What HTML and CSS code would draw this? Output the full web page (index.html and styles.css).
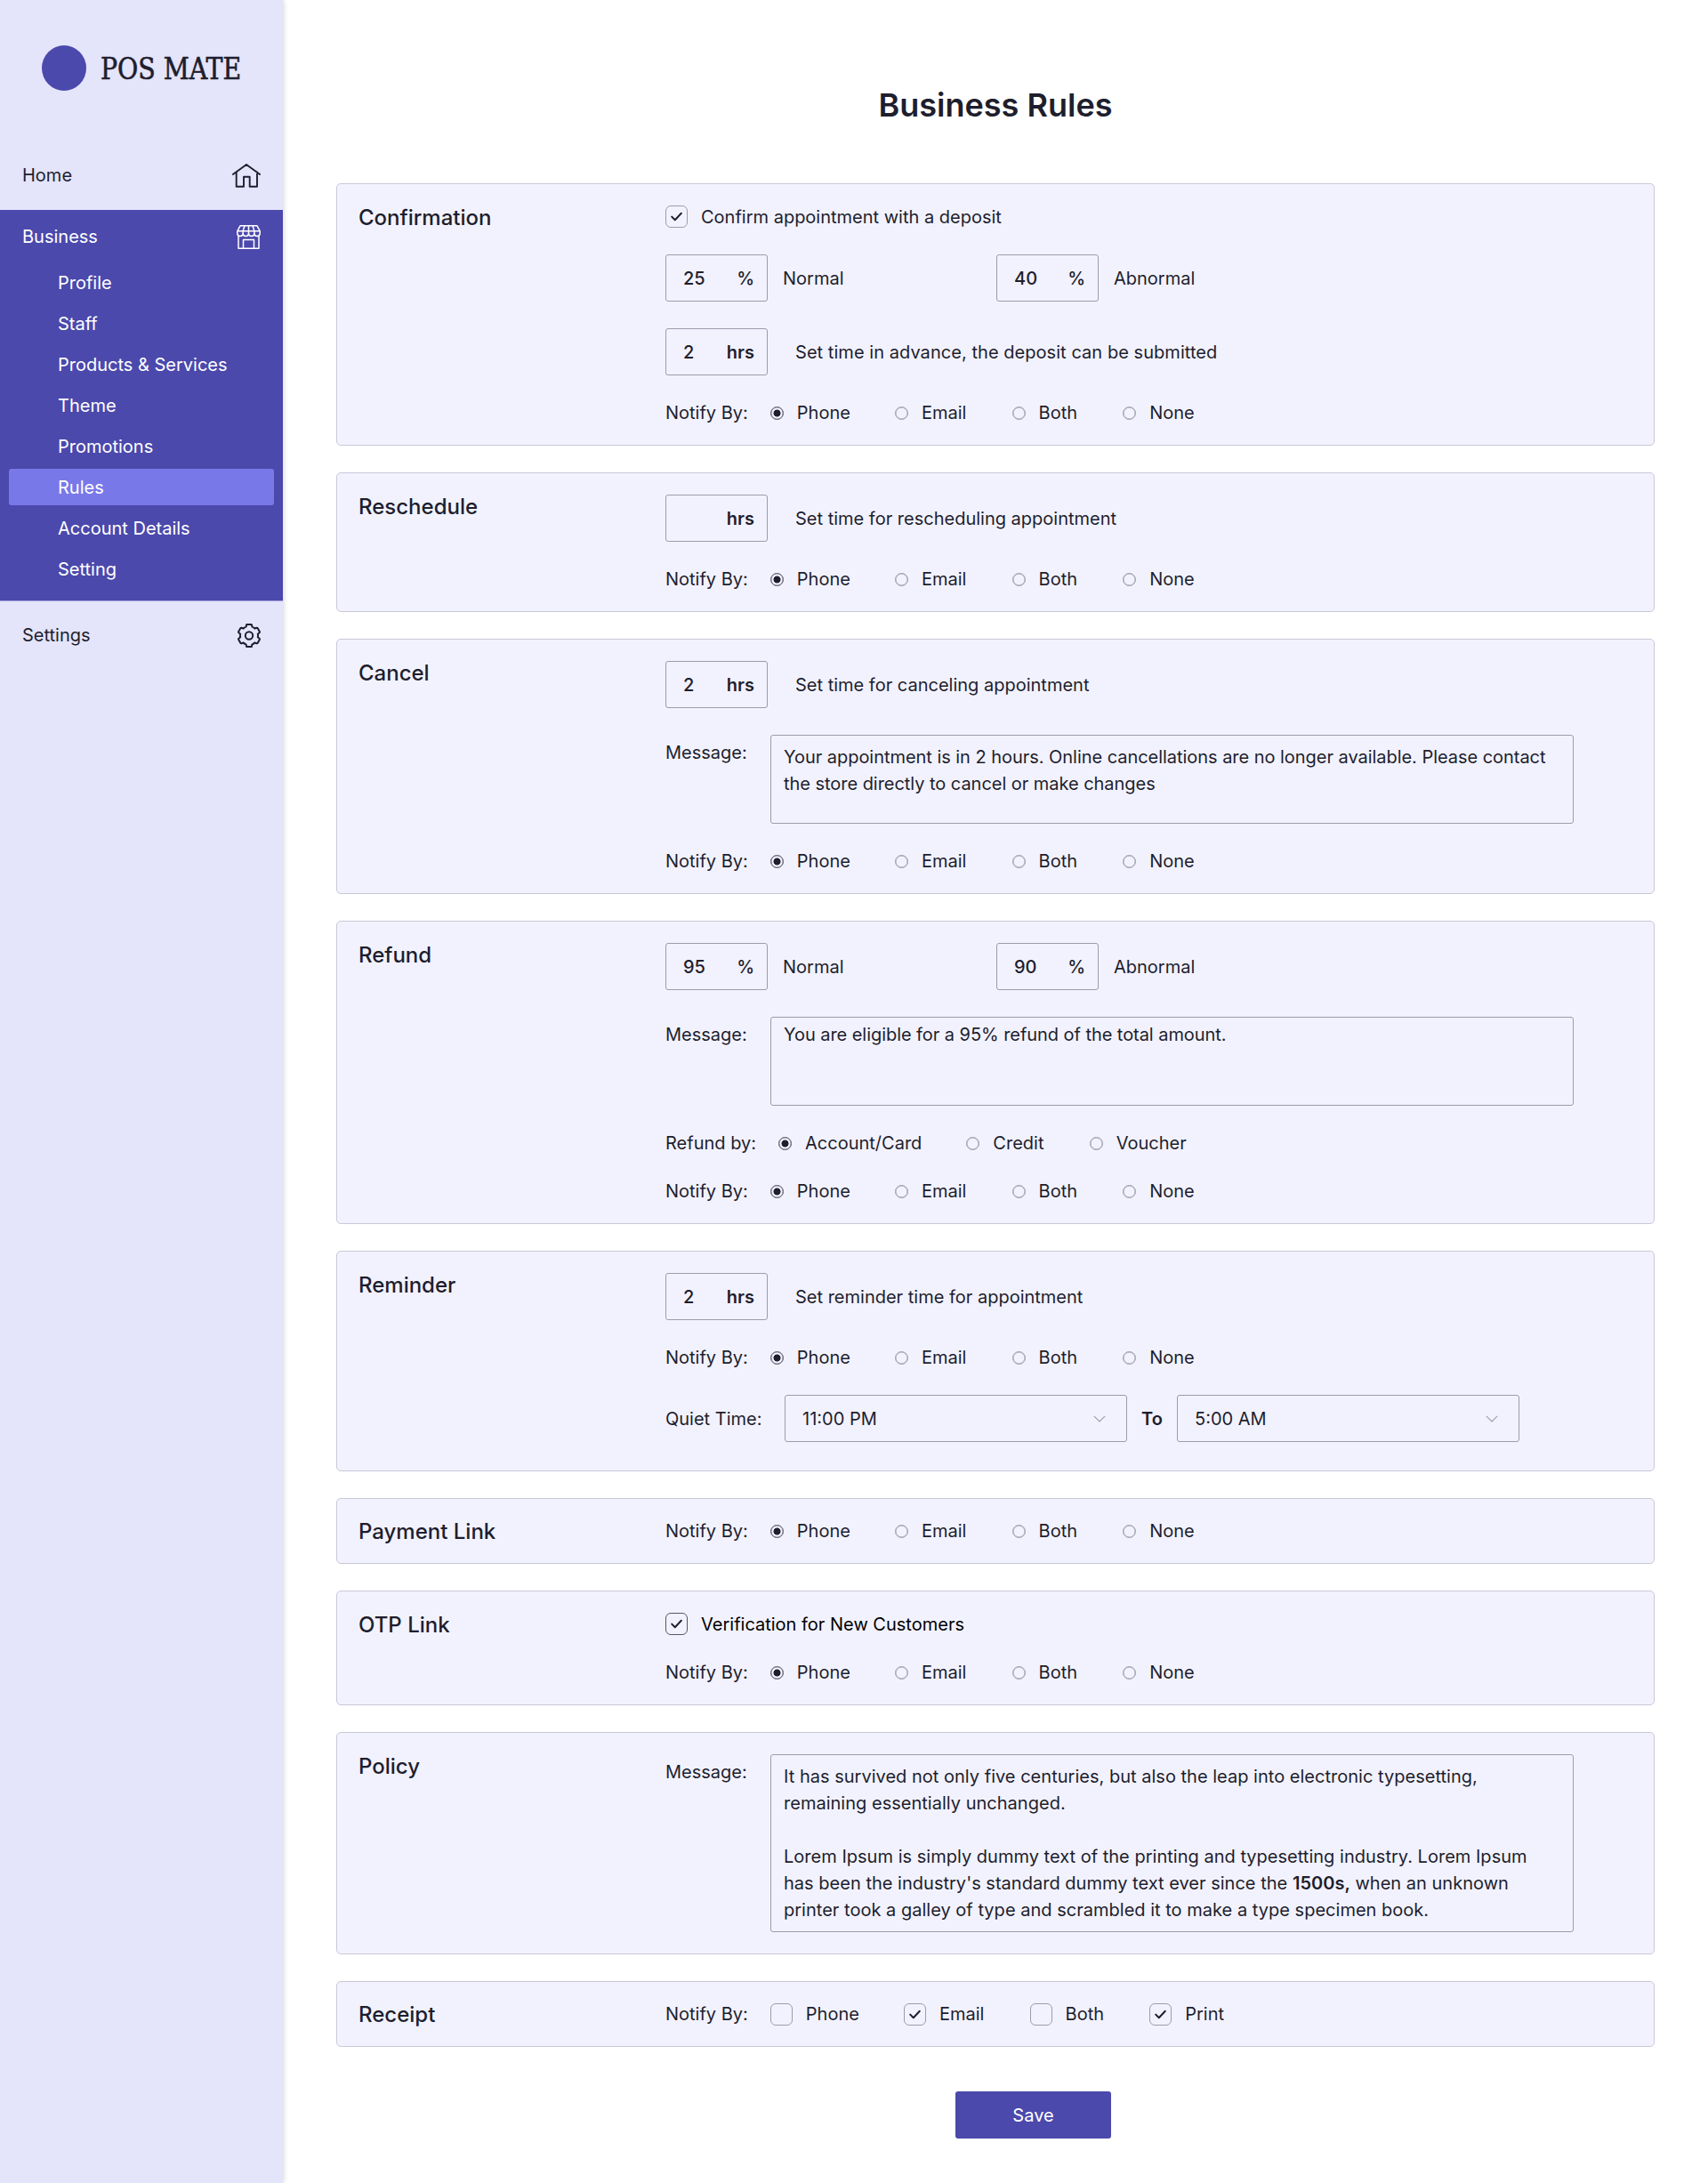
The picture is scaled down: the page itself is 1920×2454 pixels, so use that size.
FILE: index.html
```html
<!DOCTYPE html>
<html lang="en">
<head>
<meta charset="utf-8">
<title>Business Rules</title>
<link rel="stylesheet" href="styles.css">
</head>
<body>
<svg class="sprite" aria-hidden="true">
  <symbol id="tick" viewBox="0 0 25 25"><path d="M7.2 12.6l3.6 3.7 7-7.6" fill="none" stroke="currentColor" stroke-width="2" stroke-linecap="round" stroke-linejoin="round"/></symbol>
  <symbol id="chevron" viewBox="0 0 14 8"><path d="M.8.8L7 7 13.2.8" fill="none" stroke="currentColor" stroke-width="1.1"/></symbol>
</svg>
<div class="layout">
  <aside class="sidebar">
    <div class="logo"><span class="logo-mark"></span><span class="logo-name">POS MATE</span></div>
    <a class="nav-row nav-home"><span>Home</span>
      <svg class="ico-home" viewBox="0 0 32 27"><path d="M.9 12L16 1l15.100 11M4.700 9.500V25.700H13V14.700H19.700V25.700H28V9.500" fill="none" stroke="currentColor" stroke-width="1.900" stroke-linejoin="round" stroke-linecap="round"/></svg>
    </a>
    <div class="nav-group">
      <a class="nav-row"><span>Business</span>
        <svg class="ico-store" viewBox="0 0 27 27"><path d="M4 .8H23L26.200 6.800V9.300A3.100 3.100 0 0 1 19.900 9.300 3.200 3.200 0 0 1 13.500 9.300 3.200 3.200 0 0 1 7.100 9.300 3.100 3.100 0 0 1 .8 9.300V6.800ZM.8 6.800H26.200M9 .8L7.100 6.800V9.300M13.500.8V9.300M18 .8L19.900 6.800V9.300M2 12V26.200H25V12M7.500 26V16.500H19.500V26" fill="none" stroke="currentColor" stroke-width="1.500" stroke-linejoin="round"/></svg>
      </a>
      <div class="subnav">
        <a>Profile</a><a>Staff</a><a>Products &amp; Services</a><a>Theme</a><a>Promotions</a><a class="active">Rules</a><a>Account Details</a><a>Setting</a>
      </div>
    </div>
    <a class="nav-row nav-settings"><span>Settings</span>
      <svg class="ico-gear" viewBox="0 0 26 27"><path d="M10 1.500Q10 1 10.500 1H15.500Q16 1 16 1.500L16.400 3.600Q18 4 19.300 5.500L21.500 4.700Q22.300 4.500 22.700 5.200L24.800 9Q25.200 9.700 24.600 10.200L22.800 11.700Q23.300 13.500 22.800 15.300L24.600 16.800Q25.200 17.300 24.800 18L22.700 21.800Q22.300 22.500 21.500 22.300L19.300 21.500Q18 23 16.400 23.400L16 25.500Q16 26 15.500 26H10.500Q10 26 10 25.500L9.600 23.400Q8 23 6.700 21.500L4.500 22.300Q3.700 22.500 3.300 21.800L1.200 18Q.8 17.300 1.400 16.800L3.200 15.300Q2.700 13.500 3.200 11.700L1.400 10.200Q.8 9.700 1.200 9L3.300 5.200Q3.700 4.500 4.500 4.700L6.700 5.500Q8 4 9.600 3.600Z" fill="none" stroke="currentColor" stroke-width="2" stroke-linejoin="round"/><circle cx="13" cy="13.500" r="4.200" fill="none" stroke="currentColor" stroke-width="2"/></svg>
    </a>
  </aside>

  <main class="main">
    <h1>Business Rules</h1>

    <section class="card">
      <h2>Confirmation</h2>
      <div class="rows">
        <div class="check-row"><span class="box"><svg><use href="#tick"/></svg></span><span>Confirm appointment with a deposit</span></div>
        <div class="pair">
          <div class="field"><div class="num"><span>25</span><span class="pct">%</span></div><span>Normal</span></div>
          <div class="field"><div class="num"><span>40</span><span class="pct">%</span></div><span>Abnormal</span></div>
        </div>
        <div class="field wide deposit"><div class="num"><span>2</span><b>hrs</b></div><span>Set time in advance, the deposit can be submitted</span></div>
        <div class="options"><span class="label">Notify By:</span><span class="opt"><i class="radio on"></i>Phone</span><span class="opt"><i class="radio"></i>Email</span><span class="opt"><i class="radio"></i>Both</span><span class="opt"><i class="radio"></i>None</span></div>
      </div>
    </section>

    <section class="card">
      <h2>Reschedule</h2>
      <div class="rows">
        <div class="field wide"><div class="num"><span></span><b>hrs</b></div><span>Set time for rescheduling appointment</span></div>
        <div class="options"><span class="label">Notify By:</span><span class="opt"><i class="radio on"></i>Phone</span><span class="opt"><i class="radio"></i>Email</span><span class="opt"><i class="radio"></i>Both</span><span class="opt"><i class="radio"></i>None</span></div>
      </div>
    </section>

    <section class="card">
      <h2>Cancel</h2>
      <div class="rows">
        <div class="field wide"><div class="num"><span>2</span><b>hrs</b></div><span>Set time for canceling appointment</span></div>
        <div class="message"><span class="msg-label">Message:</span><div class="area">Your appointment is in 2 hours. Online cancellations are no longer available. Please contact the store directly to cancel or make changes</div></div>
        <div class="options"><span class="label">Notify By:</span><span class="opt"><i class="radio on"></i>Phone</span><span class="opt"><i class="radio"></i>Email</span><span class="opt"><i class="radio"></i>Both</span><span class="opt"><i class="radio"></i>None</span></div>
      </div>
    </section>

    <section class="card">
      <h2>Refund</h2>
      <div class="rows">
        <div class="pair">
          <div class="field"><div class="num"><span>95</span><span class="pct">%</span></div><span>Normal</span></div>
          <div class="field"><div class="num"><span>90</span><span class="pct">%</span></div><span>Abnormal</span></div>
        </div>
        <div class="message"><span class="msg-label">Message:</span><div class="area tight">You are eligible for a 95% refund of the total amount.</div></div>
        <div class="options"><span class="label">Refund by:</span><span class="opt"><i class="radio on"></i>Account/Card</span><span class="opt"><i class="radio"></i>Credit</span><span class="opt"><i class="radio"></i>Voucher</span></div>
        <div class="options"><span class="label">Notify By:</span><span class="opt"><i class="radio on"></i>Phone</span><span class="opt"><i class="radio"></i>Email</span><span class="opt"><i class="radio"></i>Both</span><span class="opt"><i class="radio"></i>None</span></div>
      </div>
    </section>

    <section class="card reminder">
      <h2>Reminder</h2>
      <div class="rows">
        <div class="field wide"><div class="num"><span>2</span><b>hrs</b></div><span>Set reminder time for appointment</span></div>
        <div class="options"><span class="label">Notify By:</span><span class="opt"><i class="radio on"></i>Phone</span><span class="opt"><i class="radio"></i>Email</span><span class="opt"><i class="radio"></i>Both</span><span class="opt"><i class="radio"></i>None</span></div>
        <div class="quiet"><span class="quiet-label">Quiet Time:</span>
          <div class="select"><span>11:00 PM</span><svg><use href="#chevron"/></svg></div>
          <b class="to">To</b>
          <div class="select"><span>5:00 AM</span><svg><use href="#chevron"/></svg></div>
        </div>
      </div>
    </section>

    <section class="card single">
      <h2>Payment Link</h2>
      <div class="rows">
        <div class="options"><span class="label">Notify By:</span><span class="opt"><i class="radio on"></i>Phone</span><span class="opt"><i class="radio"></i>Email</span><span class="opt"><i class="radio"></i>Both</span><span class="opt"><i class="radio"></i>None</span></div>
      </div>
    </section>

    <section class="card">
      <h2>OTP Link</h2>
      <div class="rows">
        <div class="check-row strong"><span class="box"><svg><use href="#tick"/></svg></span><span>Verification for New Customers</span></div>
        <div class="options"><span class="label">Notify By:</span><span class="opt"><i class="radio on"></i>Phone</span><span class="opt"><i class="radio"></i>Email</span><span class="opt"><i class="radio"></i>Both</span><span class="opt"><i class="radio"></i>None</span></div>
      </div>
    </section>

    <section class="card">
      <h2>Policy</h2>
      <div class="rows">
        <div class="message"><span class="msg-label">Message:</span><div class="area tall"><p>It has survived not only five centuries, but also the leap into electronic typesetting, remaining essentially unchanged.</p><p>Lorem Ipsum is simply dummy text of the printing and typesetting industry. Lorem Ipsum has been the industry's standard dummy text ever since the <b>1500s,</b> when an unknown printer took a galley of type and scrambled it to make a type specimen book.</p></div></div>
      </div>
    </section>

    <section class="card single">
      <h2>Receipt</h2>
      <div class="rows">
        <div class="options checks"><span class="label">Notify By:</span><span class="opt"><span class="box"></span>Phone</span><span class="opt"><span class="box"><svg><use href="#tick"/></svg></span>Email</span><span class="opt"><span class="box"></span>Both</span><span class="opt"><span class="box"><svg><use href="#tick"/></svg></span>Print</span></div>
      </div>
    </section>

    <button class="save">Save</button>
  </main>
</div>
</body>
</html>
```
FILE: styles.css
```css
* { box-sizing: border-box; }
body { margin: 0; background: #fff; color: #1e1e2d; font: 400 20px/24px Inter, sans-serif; }
h1, h2, p { margin: 0; }
b { font-weight: 600; }
.sprite { display: none; }
.layout { display: flex; width: 1920px; height: 2454px; }

.sidebar { width: 318px; background: #e4e4fb; box-shadow: 0 0 6px rgba(0, 0, 0, .22); }
.logo { display: flex; align-items: center; height: 153px; padding-left: 47px; gap: 16px; }
.logo-mark { width: 50px; height: 51px; border-radius: 50%; background: #4b49ac; }
.logo-name { padding-top: 3px; font: 33px/40px "DejaVu Serif Condensed", "DejaVu Serif", serif; font-stretch: condensed; -webkit-text-stroke: .6px #1e1e2d; white-space: nowrap; transform: scaleX(.955); transform-origin: left; }
.nav-row { display: flex; align-items: center; justify-content: space-between; padding: 0 25px; }
.nav-home { height: 83px; padding-top: 5px; }
.nav-group { height: 440px; padding-top: 12px; background: #4b49ac; color: #fff; border-bottom: 1px solid #a5a3dc; }
.nav-group .nav-row { height: 36px; }
.subnav { display: flex; flex-direction: column; gap: 5px; padding: 13px 10px 0; }
.subnav a { height: 41px; line-height: 42px; padding-left: 55px; border-radius: 3px; }
.subnav .active { background: #7978e9; }
.nav-settings { height: 76px; }
.ico-home { width: 32px; height: 27px; }
.ico-store { width: 27px; height: 27px; }
.ico-gear { width: 26px; height: 27px; }

.main { flex: 1; display: flex; flex-direction: column; gap: 30px; padding: 0 60px; }
h1 { height: 176px; padding-top: 96px; text-align: center; font-size: 36px; line-height: 44px; font-weight: 600; }
.card { display: flex; padding: 24px; background: #f2f2ff; border: 1px solid #c9c8d9; border-radius: 5px; }
.card.reminder { padding-bottom: 32px; }
.card h2 { width: 345px; font-size: 24px; line-height: 28px; height: 24px; font-weight: 500; }
.card.single { height: 74px; }
.card.single h2 { line-height: 26px; }
.rows { display: flex; flex-direction: column; gap: 30px; flex: 1; }
.check-row, .opt { display: flex; align-items: center; gap: 15px; }
.box { width: 25px; height: 25px; border: 1px solid #9c9bab; border-radius: 6px; }
.box svg { display: block; width: 25px; height: 25px; margin: -1px; }
.strong { color: #000; }
.strong .box { border-color: #56556a; color: #1e1e2d; }
.pair { display: grid; grid-template-columns: 372px 1fr; }
.field { display: flex; align-items: center; gap: 17px; }
.field.wide { gap: 31px; }
.field.deposit { letter-spacing: .05px; }
.num { display: flex; align-items: center; justify-content: space-between; width: 115px; height: 53px; padding: 0 14px 0 19px; border: 1px solid #9c9bab; border-radius: 3px; font-weight: 500; }
.pct { margin-right: 1px; transform: translateX(1px); }
.options { display: flex; align-items: center; gap: 50px; }
.checks { height: 25px; line-height: 23px; }
.label { margin-right: -25px; }
.opt:nth-child(n+4) { margin-left: 1.2px; }
.radio { width: 15px; height: 15px; border: 1.500px solid #9c9bab; border-radius: 50%; box-shadow: inset 0 0 0 .5px #9c9bab; }
.radio.on { border-color: #56556a; box-shadow: inset 0 0 0 .3px #56556a; background: radial-gradient(circle, #1e1e2d 3.700px, transparent 4.300px); }
.message { display: flex; }
.msg-label { width: 118px; padding-top: 8px; }
.area { width: 903px; height: 100px; padding: 9px 14px; border: 1px solid #9c9bab; border-radius: 3px; line-height: 30px; letter-spacing: -.04px; }
.area.tight { padding-top: 4px; letter-spacing: -.055px; }
.area.tall { height: 200px; letter-spacing: .015px; }
.area p + p { margin-top: 30px; }
.quiet { display: flex; align-items: center; }
.quiet-label { width: 134px; }
.select { display: flex; align-items: center; justify-content: space-between; width: 385px; height: 53px; padding: 0 23px 0 19px; border: 1px solid #9c9bab; border-radius: 3px; }
.select svg { width: 14px; height: 8px; color: #9c9bab; }
.to { width: 56px; text-align: center; }
.save { width: 175px; height: 53px; margin: 20px 0 0 696px; border: 0; border-radius: 3px; background: #4b49ac; color: #fff; font: 400 20px/24px Inter, sans-serif; }
```
